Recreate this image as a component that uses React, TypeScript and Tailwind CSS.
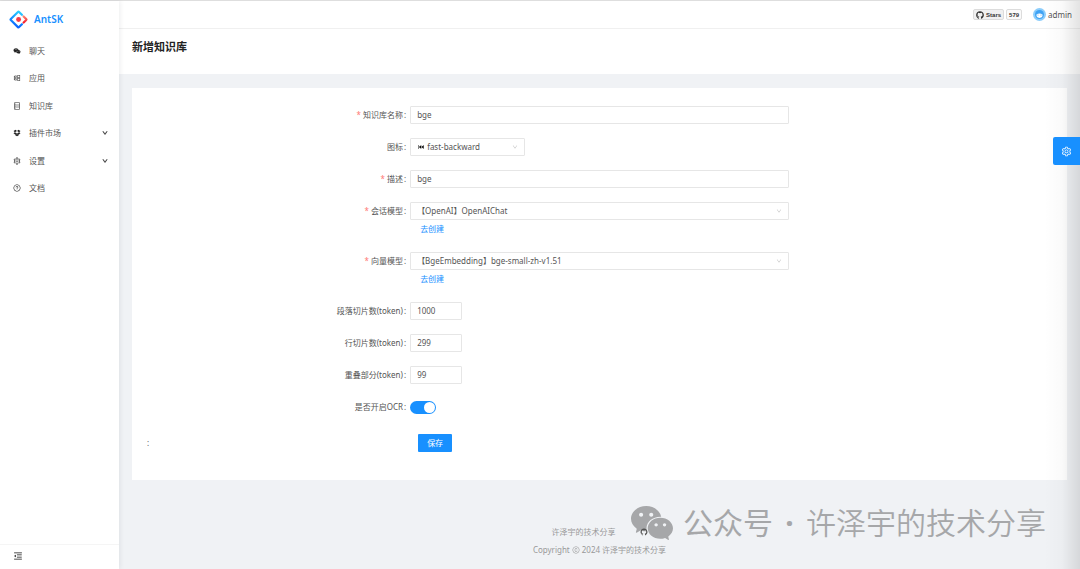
import type { ReactNode } from 'react';
import {
  AiFillFastBackward,
  AiFillWechat,
  AiOutlineDatabase,
  AiOutlineDown,
  AiOutlineDropbox,
  AiOutlineMenuFold,
  AiOutlineQuestionCircle,
  AiOutlineSetting,
  AiOutlineWindows,
  AiOutlineCopyright,
  AiOutlineGithub
} from 'react-icons/ai';
import { FaGithub } from 'react-icons/fa';

const menu = [
  { icon: <AiFillWechat />, title: '聊天', expandable: false },
  { icon: <AiOutlineWindows />, title: '应用', expandable: false },
  { icon: <AiOutlineDatabase />, title: '知识库', expandable: false },
  { icon: <AiOutlineDropbox />, title: '插件市场', expandable: true },
  { icon: <AiOutlineSetting />, title: '设置', expandable: true },
  { icon: <AiOutlineQuestionCircle />, title: '文档', expandable: false }
];

const Logo = () => (
  <svg viewBox="0 0 200 200" className="h-[19px] w-[19px]" fill="none" aria-hidden="true">
    <defs>
      <linearGradient id="logo-blue" x1="0.6" y1="0" x2="0.4" y2="1">
        <stop offset="0" stopColor="#29cdff" />
        <stop offset="0.5" stopColor="#148eff" />
        <stop offset="1" stopColor="#0a60ff" />
      </linearGradient>
      <linearGradient id="logo-red" x1="0" y1="0" x2="0" y2="1">
        <stop offset="0" stopColor="#fa816e" />
        <stop offset="1" stopColor="#f51d2c" />
      </linearGradient>
    </defs>
    <path
      d="M136 50 L106 20 Q100 14 94 20 L19 94 Q13 100 19 106 L94 180 Q100 186 106 180 L136 150"
      stroke="url(#logo-blue)"
      strokeWidth="23"
      strokeLinecap="round"
    />
    <path d="M154 68 L181 95 Q186 100 181 105 L154 132" stroke="url(#logo-red)" strokeWidth="23" strokeLinecap="round" />
    <circle cx="101" cy="100" r="26" fill="#f5384a" />
  </svg>
);

const Avatar = () => (
  <svg viewBox="0 0 26 26" className="h-[13px] w-[13px]" aria-hidden="true">
    <circle cx="13" cy="13" r="13" fill="#8ccdfb" />
    <circle cx="13" cy="13" r="9" fill="#3fa3f5" />
    <path d="M7 13 Q13 9 19 13 Q20 19 13 20 Q6 19 7 13Z" fill="#fff" />
    <circle cx="10" cy="14" r="1" fill="#3fa3f5" />
    <circle cx="16" cy="14" r="1" fill="#3fa3f5" />
  </svg>
);

type RowProps = { id: string; label: string; required?: boolean; children: ReactNode };

const Row = ({ id, label, required, children }: RowProps) => (
  <div className="grid grid-cols-[7fr_10fr_7fr] items-start">
    <label htmlFor={id} className="flex h-[18px] items-center justify-end pr-1">
      {required && <span className="mr-[2px] text-[#ff7875]">*</span>}
      {label}
      <span className="ml-px">:</span>
    </label>
    <div>{children}</div>
  </div>
);

const fieldClass =
  'block h-[18px] appearance-none rounded-[1px] border border-[#e6e6e6] bg-white px-[6px] text-[8px] leading-4 outline-none focus:border-[#1890ff]';

type ModelSelectProps = { id: string; value: string };

const ModelSelect = ({ id, value }: ModelSelectProps) => (
  <>
    <div className="relative">
      <select id={id} className={`${fieldClass} w-full`}>
        <option>{value}</option>
      </select>
      <AiOutlineDown className="pointer-events-none absolute top-[6px] right-[7px] h-[6px] w-[6px] text-[#bfbfbf]" />
    </div>
    <a href="#create" className="ml-[10px] flex h-[18px] w-fit items-center text-[#1890ff]">
      去创建
    </a>
  </>
);

const Sidebar = () => (
  <aside className="relative z-10 flex w-[119px] shrink-0 flex-col bg-white shadow-[1px_0_5px_rgba(0,21,41,0.08)]">
    <a href="#home" className="flex h-9 items-center gap-[6px] pl-[9px] text-[10px] font-semibold text-[#1890ff]">
      <Logo />
      AntSK
    </a>
    <nav>
      <ul className="grid h-[165px] grid-rows-6">
        {menu.map((item) => (
          <li key={item.title}>
            <a href="#menu" className="flex h-full items-center pr-[11px] pl-[13px]">
              <span className="text-[8px] text-[#222]">{item.icon}</span>
              <span className="ml-2 flex-1">{item.title}</span>
              {item.expandable && <AiOutlineDown className="h-[6px] w-[6px] stroke-[80] text-[#333]" />}
            </a>
          </li>
        ))}
      </ul>
    </nav>
    <div className="mt-auto flex h-[25px] items-center border-t border-[#f5f5f5] pb-[3px] pl-[13px]">
      <button type="button" aria-label="收起菜单">
        <AiOutlineMenuFold className="h-[10px] w-[10px] text-[#111]" />
      </button>
    </div>
  </aside>
);

const TopBar = () => (
  <header className="flex h-[28px] items-center justify-end border-b border-[#f0f0f0] bg-white pr-2">
    <a
      href="#stars"
      className="flex h-[11px] items-center gap-[2px] rounded-[2px] border border-[#dcdcdc] bg-[#f0f0f0] px-[2px] text-[6px] font-bold text-[#333]"
    >
      <FaGithub className="h-2 w-2" />
      <span className="font-['Liberation_Sans']">Stars</span>
    </a>
    <a
      href="#count"
      className="ml-[2px] flex h-[11px] items-center rounded-[2px] border border-[#dcdcdc] bg-[#fafafa] px-[2px] font-['Liberation_Sans'] text-[6px] font-bold text-[#333]"
    >
      579
    </a>
    <button type="button" className="ml-[11px] flex items-center gap-[2px]">
      <Avatar />
      admin
    </button>
  </header>
);

const KnowledgeForm = () => (
  <form className="mx-[13px] mt-[14px] flex flex-col gap-[14px] bg-white px-[13px] pt-[18px] pb-7">
    <Row id="name" label="知识库名称" required>
      <input id="name" defaultValue="bge" className={`${fieldClass} w-full pb-px`} />
    </Row>
    <Row id="icon" label="图标">
      <div className="relative w-[115px]">
        <select id="icon" className={`${fieldClass} w-full pl-4`}>
          <option>fast-backward</option>
        </select>
        <AiFillFastBackward className="pointer-events-none absolute top-[5px] left-[7px] h-2 w-2 text-[#111]" />
        <AiOutlineDown className="pointer-events-none absolute top-[6px] right-[7px] h-[6px] w-[6px] text-[#bfbfbf]" />
      </div>
    </Row>
    <Row id="description" label="描述" required>
      <input id="description" defaultValue="bge" className={`${fieldClass} w-full pb-px`} />
    </Row>
    <Row id="chat-model" label="会话模型" required>
      <ModelSelect id="chat-model" value="【OpenAI】OpenAIChat" />
    </Row>
    <Row id="embedding-model" label="向量模型" required>
      <ModelSelect id="embedding-model" value="【BgeEmbedding】bge-small-zh-v1.51" />
    </Row>
    <Row id="paragraph" label="段落切片数(token)">
      <input id="paragraph" defaultValue="1000" className={`${fieldClass} w-[52px] pb-px`} />
    </Row>
    <Row id="line" label="行切片数(token)">
      <input id="line" defaultValue="299" className={`${fieldClass} w-[52px] pb-px`} />
    </Row>
    <Row id="overlap" label="重叠部分(token)">
      <input id="overlap" defaultValue="99" className={`${fieldClass} w-[52px] pb-px`} />
    </Row>
    <Row id="ocr" label="是否开启OCR">
      <div className="flex h-[18px] items-center">
        <input
          id="ocr"
          type="checkbox"
          role="switch"
          defaultChecked
          className="flex h-[13px] w-[26px] appearance-none items-center rounded-full bg-[#bfbfbf] px-px before:h-[11px] before:w-[11px] before:rounded-full before:bg-white checked:justify-end checked:bg-[#1890ff]"
        />
      </div>
    </Row>
    <div className="mt-1 grid grid-cols-[7fr_10fr_7fr] items-center">
      <span className="pl-[2px]">:</span>
      <div className="pl-2">
        <button type="submit" className="block h-[18px] w-[34px] rounded-[1px] bg-[#1890ff] text-white">
          保存
        </button>
      </div>
    </div>
  </form>
);

const Footer = () => (
  <footer className="mt-[43px] flex flex-col items-center text-[#999]">
    <div className="flex h-[18px] items-center gap-6">
      <a href="#author">许泽宇的技术分享</a>
      <a href="#github" aria-label="GitHub" className="relative z-30">
        <AiOutlineGithub className="h-2 w-2 text-[#555]" />
      </a>
    </div>
    <p className="flex h-[17px] items-center gap-[2px]">
      Copyright <AiOutlineCopyright className="h-2 w-2" /> 2024 许泽宇的技术分享
    </p>
  </footer>
);

const App = () => {
  return (
    <div className="relative flex min-h-screen border-t border-[#dedede] bg-[#f0f2f5] font-['Noto_Sans','Noto_Sans_CJK_SC',sans-serif] text-[8px] leading-3 text-[#555]">
      <Sidebar />
      <main className="min-w-0 flex-1">
        <TopBar />
        <div className="h-[45px] bg-white px-[13px] pt-[10px]">
          <h1 className="text-[11px] leading-4 font-bold text-[#222]">新增知识库</h1>
        </div>
        <KnowledgeForm />
        <Footer />
      </main>

      {/* watermark over the footer */}
      <div className="pointer-events-none absolute right-[34px] bottom-[22px] z-20 flex items-center text-[30px] leading-10 text-[#a6a7a9]">
        <AiFillWechat className="mr-[7px] h-[48px] w-[48px]" />
        <span>公众号</span>
        <span className="mx-[9px] w-[15px] text-center font-bold">·</span>
        <span className="font-[350]">许泽宇的技术分享</span>
      </div>

      {/* drawer shadow and its handle */}
      <div className="pointer-events-none absolute inset-y-0 right-0 w-9 bg-linear-to-r from-transparent via-black/2 to-black/11" />
      <button
        type="button"
        aria-label="主题设置"
        className="absolute top-[136px] right-0 z-20 flex h-7 w-[27px] items-center justify-center rounded-l-[2px] bg-[#1890ff] text-white"
      >
        <AiOutlineSetting className="h-[11px] w-[11px]" />
      </button>
    </div>
  );
};

export default App;
